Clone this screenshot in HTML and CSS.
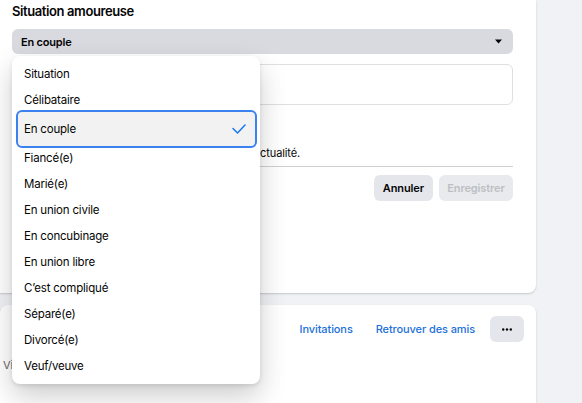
FILE: index.html
```html
<!DOCTYPE html>
<html lang="fr">
<head>
<meta charset="utf-8">
<title>Situation amoureuse</title>
<link rel="stylesheet" href="styles.css">
</head>
<body>
<div class="page">
  <section class="card card-edit">
    <h2 class="title">Situation amoureuse</h2>
    <div class="select">
      <span class="select-value">En couple</span>
      <svg class="caret" width="7" height="5" viewBox="0 0 7 5"><path d="M0 0.5H7L3.5 4.5Z" fill="#050505"/></svg>
    </div>
    <div class="textbox"></div>
    <p class="note">Ce changement sera aussi visible dans ton fil d’actualité.</p>
    <div class="divider"></div>
    <div class="actions">
      <button class="btn">Annuler</button>
      <button class="btn btn-disabled">Enregistrer</button>
    </div>
  </section>
  <section class="card card-friends">
    <div class="friends-head">
      <a class="link">Invitations</a>
      <a class="link">Retrouver des amis</a>
      <button class="btn btn-more" aria-label="Plus"><svg width="10" height="3" viewBox="0 0 10 3"><circle cx="1.2" cy="1.5" r="1.2" fill="#050505"/><circle cx="5" cy="1.5" r="1.2" fill="#050505"/><circle cx="8.8" cy="1.5" r="1.2" fill="#050505"/></svg></button>
    </div>
    <p class="friends-sub">Vivre en couple</p>
  </section>

  <ul class="menu">
    <li class="item">Situation</li>
    <li class="item">Célibataire</li>
    <li class="item item-selected">En couple
      <svg class="check" width="14" height="10" viewBox="0 0 14 10"><path d="M1 4.5L5.5 9L13 1" fill="none" stroke="#1877f2" stroke-width="1.5" stroke-linecap="round" stroke-linejoin="round"/></svg>
    </li>
    <li class="item">Fiancé(e)</li>
    <li class="item">Marié(e)</li>
    <li class="item">En union civile</li>
    <li class="item">En concubinage</li>
    <li class="item">En union libre</li>
    <li class="item">C’est compliqué</li>
    <li class="item">Séparé(e)</li>
    <li class="item">Divorcé(e)</li>
    <li class="item">Veuf/veuve</li>
  </ul>
</div>
</body>
</html>
```

FILE: styles.css
```css
* { box-sizing: border-box; }
html, body { margin: 0; padding: 0; }
body {
  background: #f0f2f5;
  font-family: Inter, "Noto Sans", Roboto, sans-serif;
  color: #050505;
  height: 403px;
  overflow: hidden;
}
.page {
  position: relative;
  width: 536px;
}
.card {
  background: #fff;
  box-shadow: 0 1px 2px rgba(0, 0, 0, 0.18);
}
.card-edit {
  padding: 0 23px 92px 12px;
  border-radius: 0 0 8px 0;
}
.title {
  margin: 0;
  font-size: 13px;
  line-height: 22px;
  font-weight: 600;
  letter-spacing: -0.4px;
}
.select {
  margin-top: 7px;
  height: 25px;
  background: #d8dadf;
  border-radius: 6px;
  display: flex;
  align-items: center;
  justify-content: space-between;
  padding: 0 11px 0 9px;
}
.select-value {
  font-size: 11px;
  font-weight: 600;
  letter-spacing: -0.2px;
}
.caret { display: block; }
.textbox {
  margin-top: 10px;
  height: 41px;
  border: 1px solid #dddfe2;
  border-radius: 6px;
}
.note {
  margin: 40px 0 0;
  font-size: 11px;
  line-height: 16px;
  letter-spacing: -0.1px;
}
.divider {
  margin-top: 5px;
  height: 1px;
  background: #ced0d4;
}
.actions {
  margin-top: 8px;
  display: flex;
  justify-content: flex-end;
  gap: 6px;
}
.btn {
  border: 0;
  height: 26px;
  border-radius: 6px;
  background: #e4e6eb;
  font-family: inherit;
  font-size: 11px;
  font-weight: 600;
  letter-spacing: -0.1px;
  color: #050505;
  padding: 0 9px;
}
.btn-disabled {
  color: #bcc0c4;
  background: #e8eaed;
  width: 74px;
  padding: 0;
}
.card-friends {
  margin-top: 12px;
  border-radius: 8px 8px 0 0;
  padding: 11px 12px 40px 0;
}
.friends-head {
  display: flex;
  justify-content: flex-end;
  align-items: center;
}
.link {
  color: #216fdb;
  font-size: 11px;
  font-weight: 500;
  letter-spacing: -0.1px;
  margin-right: 23px;
}
.link:nth-child(2) { margin-right: 15px; }
.btn-more {
  width: 34px;
  padding: 0;
  display: flex;
  align-items: center;
  justify-content: center;
}
.btn-more svg { display: block; }
.friends-sub {
  margin: 15px 0 0 3px;
  font-size: 11px;
  line-height: 16px;
  color: #65676b;
}
.menu {
  position: absolute;
  left: 12px;
  top: 56px;
  width: 248px;
  margin: 0;
  padding: 5px 0;
  list-style: none;
  background: #fff;
  border-radius: 8px;
  box-shadow: 0 12px 28px rgba(0, 0, 0, 0.2), 0 2px 4px rgba(0, 0, 0, 0.1);
}
.item {
  height: 26px;
  display: flex;
  align-items: center;
  padding-left: 12px;
  font-size: 11.5px;
  letter-spacing: -0.2px;
}
.item-selected {
  height: 38px;
  margin: -3px 3px -3px 4px;
  padding: 0 9px 0 6px;
  border: 2px solid #3b82f0;
  border-radius: 6px;
  background: #f2f2f2;
  justify-content: space-between;
  position: relative;
}
.check { display: block; }
```
